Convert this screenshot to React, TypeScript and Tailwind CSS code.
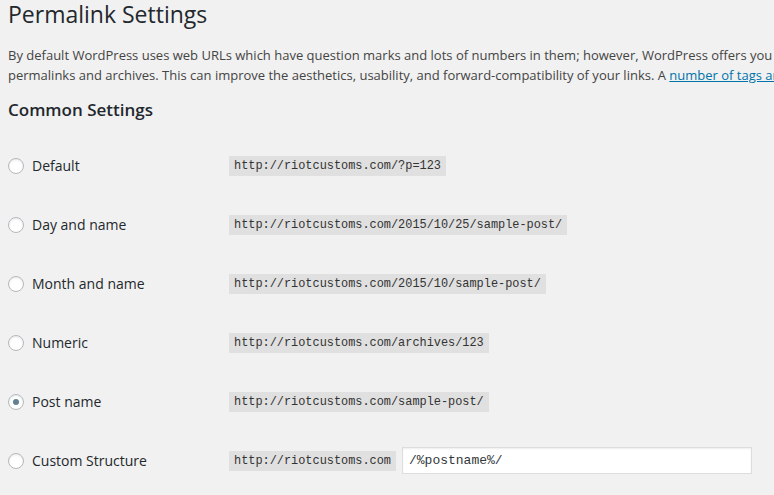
import React from "react";

const rows = [
  { label: "Default", code: "http://riotcustoms.com/?p=123", checked: false },
  { label: "Day and name", code: "http://riotcustoms.com/2015/10/25/sample-post/", checked: false },
  { label: "Month and name", code: "http://riotcustoms.com/2015/10/sample-post/", checked: false },
  { label: "Numeric", code: "http://riotcustoms.com/archives/123", checked: false },
  { label: "Post name", code: "http://riotcustoms.com/sample-post/", checked: true },
];

function Radio({ checked }: { checked: boolean }) {
  return (
    <span className="flex h-4 w-4 shrink-0 items-center justify-center rounded-full border border-[#b4b9be] bg-white shadow-[inset_0_1px_2px_rgba(0,0,0,0.1)]">
      {checked && <span className="h-[6px] w-[6px] rounded-full bg-[#62808f]" />}
    </span>
  );
}

function Code({ children }: { children: React.ReactNode }) {
  return (
    <code className="whitespace-nowrap bg-[rgba(0,0,0,0.07)] px-[5px] pt-[3px] pb-[2px] font-['Liberation_Mono',monospace] text-[11.9px] leading-[15px] text-[#333]">
      {children}
    </code>
  );
}

export default function App() {
  return (
    <div className="h-[495px] w-[774px] overflow-hidden bg-[#f1f1f1] font-['Open_Sans',sans-serif] text-[#444]">
      <div className="w-[1100px] pl-2">
        <h1 className="-mt-px text-[23px] leading-[31px] font-normal text-[#23282d]">Permalink Settings</h1>
        <p className="mt-[16px] whitespace-nowrap text-[13px] leading-[19.5px] text-[#444]">
          By default WordPress uses web URLs which have question marks and lots of numbers in them; however, WordPress offers you the ability to create a custom URL structure for your
          <br />
          permalinks and archives. This can improve the aesthetics, usability, and forward-compatibility of your links. A{" "}
          <a className="text-[#0073aa] underline" href="#">number of tags are available</a>, and here are some examples to get you started.
        </p>
        <h2 className="mt-[13px] text-[17px] leading-[24px] font-semibold text-[#23282d]">Common Settings</h2>
        <div className="mt-[14px] flex flex-col">
          {rows.map((r) => (
            <div key={r.label} className="flex h-[59px] items-center">
              <div className="flex w-[221px] items-center gap-2">
                <Radio checked={r.checked} />
                <span className="text-[14px] text-[#23282d]">{r.label}</span>
              </div>
              <Code>{r.code}</Code>
            </div>
          ))}
          <div className="flex h-[59px] items-center">
            <div className="flex w-[221px] items-center gap-2">
              <Radio checked={false} />
              <span className="text-[14px] text-[#23282d]">Custom Structure</span>
            </div>
            <Code>http://riotcustoms.com</Code>
            <input
              readOnly
              value="/%postname%/"
              className="ml-[6px] h-[27px] w-[350px] border border-[#ddd] bg-white px-[6px] font-['Liberation_Mono',monospace] text-[13px] text-[#32373c] shadow-[inset_0_1px_2px_rgba(0,0,0,0.07)] outline-none"
            />
          </div>
        </div>
      </div>
    </div>
  );
}
